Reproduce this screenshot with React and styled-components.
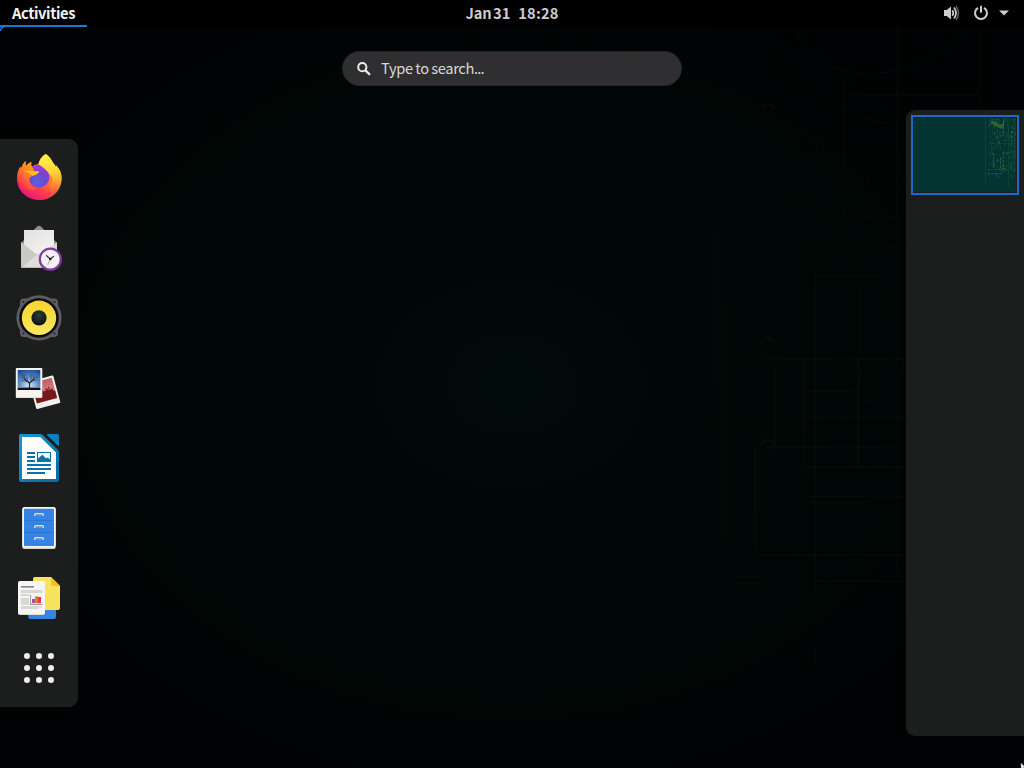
import React from "react";
import styled, { createGlobalStyle } from "styled-components";

const GlobalStyle = createGlobalStyle`
  *, *::before, *::after { box-sizing: border-box; }
  body {
    margin: 0;
    background: #000;
    overflow: hidden;
    font-family: "Noto Sans CJK SC", "Noto Sans", sans-serif;
  }
`;

const Desktop = styled.div`
  position: relative;
  isolation: isolate;
  display: flex;
  flex-direction: column;
  width: 1024px;
  height: 768px;
  overflow: hidden;
  background: radial-gradient(ellipse 560px 430px at 50% 50%, #000a09 0%, #000706 50%, #000303 100%);
`;

const Backdrop = styled.svg`
  position: absolute;
  inset: 0;
  z-index: -1;
  opacity: 0.65;
`;

const TopBar = styled.header`
  display: grid;
  grid-template-columns: 1fr auto 1fr;
  height: 27px;
  background: #000;
  font-size: 14.67px;
  font-weight: 700;
  line-height: 25px;
`;

const Activities = styled.div`
  width: 87px;
  height: 27px;
  padding-left: 12px;
  color: #f2f2f2;
  border-bottom: 2px solid #1c74dc;
  letter-spacing: -0.38px;
  white-space: nowrap;
`;

const Clock = styled.div`
  display: flex;
  gap: 8px;
  color: #ccc;
  white-space: nowrap;
`;

const ClockDate = styled.span`
  letter-spacing: -0.1px;
  word-spacing: -1.6px;
`;

const ClockTime = styled.span`
  letter-spacing: 0.2px;
`;

const StatusArea = styled.div`
  display: flex;
  justify-content: flex-end;
  align-items: center;
  gap: 13px;
  padding-right: 15px;
  padding-bottom: 1px;
`;

const CornerArc = styled.svg`
  display: block;
  height: 5px;
  width: 6px;
  flex: none;
`;

const SearchRow = styled.div`
  display: flex;
  justify-content: center;
  height: 78px;
  padding-top: 19px;
`;

const SearchEntry = styled.div`
  display: flex;
  align-items: center;
  gap: 9px;
  width: 340px;
  height: 35px;
  padding: 0 13px;
  border: 1px solid #232525;
  border-radius: 18px;
  background: #2f2f31;
  color: #d8d8d8;
  font-size: 14.67px;
  white-space: nowrap;
`;

const SearchHint = styled.span`
  padding-bottom: 2px;
  letter-spacing: -0.35px;
  word-spacing: -0.4px;
`;

const HintDots = styled.span`
  letter-spacing: -0.8px;
`;

const Overview = styled.main`
  display: flex;
  justify-content: space-between;
  align-items: flex-start;
`;

const Dash = styled.nav`
  display: flex;
  flex-direction: column;
  width: 78px;
  height: 568px;
  margin-top: 29px;
  padding: 4px 0;
  border-radius: 0 9px 9px 0;
  background: #1c1e1d;
`;

const DashItem = styled.div`
  display: flex;
  justify-content: center;
  align-items: center;
  height: 70px;
`;

const Workspaces = styled.aside`
  width: 118px;
  height: 626px;
  padding: 5px;
  border-radius: 9px 0 0 9px;
  background: #1c1e1d;
`;

const Thumbnail = styled.div`
  width: 108px;
  height: 80px;
  padding: 1px;
  border: 2px solid #1b6acb;
  background: #1c1e1d;

  svg { display: block; }
`;

const Pointer = styled.svg`
  position: absolute;
  right: 0;
  bottom: 0;
`;

const Icon = ({ children }) => (
  <svg width="48" height="48" viewBox="0 0 48 48">{children}</svg>
);

const Firefox = () => (
  <Icon>
    <defs>
      <linearGradient id="fxBody" x1=".82" y1=".08" x2=".3" y2="1">
        <stop offset=".05" stopColor="#fff044" />
        <stop offset=".3" stopColor="#ffb82b" />
        <stop offset=".52" stopColor="#ff7139" />
        <stop offset=".75" stopColor="#ff3750" />
        <stop offset="1" stopColor="#e5147e" />
      </linearGradient>
      <linearGradient id="fxTail" x1=".4" y1="0" x2=".6" y2="1">
        <stop offset="0" stopColor="#fff24a" />
        <stop offset=".5" stopColor="#ffd238" />
        <stop offset="1" stopColor="#ff7a30" stopOpacity="0" />
      </linearGradient>
      <linearGradient id="fxHead" x1="0" y1="1" x2="1" y2="0">
        <stop offset="0" stopColor="#ff3f4a" stopOpacity="0" />
        <stop offset=".55" stopColor="#ff8a20" />
        <stop offset="1" stopColor="#ffa91f" />
      </linearGradient>
      <radialGradient id="fxGlobe" cx=".42" cy=".75" r=".8">
        <stop offset="0" stopColor="#5a63dd" />
        <stop offset=".5" stopColor="#6c48cf" />
        <stop offset="1" stopColor="#a532d8" />
      </radialGradient>
    </defs>
    <path fill="url(#fxBody)" d="M30.8 0C35 2.8 36.5 6 38.5 9.5c1.2 1 1.7 2 2 3.1l.7-1.1c3.8 4 5.5 8.3 5.5 12.7C46.5 37 36.5 46 24.3 46 11.5 46 2 36.5 2 24c0-5.2 1.3-8.5 3.5-11.5L6 15c1-3.5 2.6-6 4.6-8l.2 5.2c1.4-1.3 3.2-3.6 5.6-4.2-.5 2-.2 3.3.3 4.8 2-1.6 4-2.5 6.7-2.5C24.5 7 26.5 2.5 30.8 0Z" />
    <circle cx="24.2" cy="23" r="10.4" fill="url(#fxGlobe)" />
    <path fill="#a436da" d="M16.5 13.2c4-3.2 8.5-3.4 12.3-1.3 3 1.7 4.8 4 5.5 7-4-3.6-8.3-4.4-12.5-2.8Z" />
    <path fill="url(#fxTail)" d="M30.8 0C35 2.8 36.5 6 38.5 9.5c1.2 1 1.7 2 2 3.1l.7-1.1c3.8 4 5.5 8.3 5.3 12.7-.3 7-3.5 12.3-8.8 15.8-3-3-3.3-6-1.5-9.5 1.2-4.5.1-8-2-10.5-2.5-4-6-6.5-10.8-9.7C24 6.4 26.5 2.5 30.8 0Z" />
    <path fill="url(#fxHead)" d="M4 28c-1-7-1-11 1.5-15.5L6 15c1-3.5 2.6-6 4.6-8l.2 5.2c1.4-1.3 3.2-3.6 5.6-4.2-.5 2-.2 3.3.3 4.8l2.5 4 5 .4c-.6 2.4-2.7 3.3-5.2 4.2-2 .7-3.6 1-4.5 3-1 5 2 9 7 10.6C13 38 6 35 4 28Z" />
    <path fill="#ffbd28" d="M8.3 17c2.7-.3 5.8-.5 8.5.2l7.2.4c-.8 2.7-3.4 3.3-6.4 4.2-2.2-2.6-5.4-3.9-9.3-4.8Z" />
    <path fill="#ff6b37" opacity=".55" d="M34 20c2.2 6 .5 11.5-4 13.5 6-.5 8.8-6 6.6-11.5-.9-1.2-1.7-1.8-2.6-2Z" />
  </Icon>
);

const Evolution = () => (
  <Icon>
    <defs>
      <linearGradient id="paper" x1="0" y1="0" x2=".6" y2="1">
        <stop offset="0" stopColor="#e2e1df" /><stop offset="1" stopColor="#f6f5f4" />
      </linearGradient>
    </defs>
    <path fill="#8f8f8c" d="M6 19 21.8 2.7Q24 1 26.2 2.7L42 19v24.5H6Z" />
    <path fill="url(#paper)" d="M9 6h30v32H9Z" />
    <path fill="#c9c9c5" d="m6 18 17 13.5L6 43.7Z" />
    <path fill="#d6d5d1" d="m42 18-16 13 16 12.7Z" />
    <path fill="#deddda" d="M6 43.7 21 30.8q3-2 6 0l15 12.9Z" />
    <path fill="none" stroke="#bdbdb8" strokeWidth=".5" d="m6 43.5 15-12.7q3-2 6 0" />
    <circle cx="35.3" cy="35.2" r="10.5" fill="#f3f1f4" stroke="#813ca1" strokeWidth="2.2" />
    <path stroke="#242424" strokeWidth="1.2" strokeLinecap="round" d="m35.3 35-3.8-3.4M35.3 35l3.3-2.6" />
    <path stroke="#e87b77" strokeWidth=".8" d="m35.2 35-2.5 6" />
    <circle cx="35.3" cy="35" r="1.3" fill="#161616" />
  </Icon>
);

const Speaker = () => (
  <Icon>
    <defs>
      <linearGradient id="cone" x1="0" y1="0" x2="0" y2="1">
        <stop offset="0" stopColor="#f8d22e" /><stop offset="1" stopColor="#f9e961" />
      </linearGradient>
      <radialGradient id="dome" cx=".5" cy=".35" r=".6">
        <stop offset="0" stopColor="#343b3e" /><stop offset="1" stopColor="#0d1213" />
      </radialGradient>
    </defs>
    <rect x="5" y="4.6" width="38" height="38.4" rx="4" fill="#5e5c64" />
    <circle cx="24" cy="23.8" r="22.6" fill="#5e5c64" />
    {[[8.4, 8], [39.6, 8], [8.4, 39.6], [39.6, 39.6]].map(([x, y]) => (
      <circle key={`${x}-${y}`} cx={x} cy={y} r="1" fill="#202024" />
    ))}
    <circle cx="24" cy="23.8" r="19.9" fill="#171719" />
    <circle cx="24" cy="23.8" r="18.6" fill="#050505" />
    <circle cx="24" cy="23.8" r="17.2" fill="url(#cone)" />
    <circle cx="24" cy="23.8" r="7.6" fill="url(#dome)" />
  </Icon>
);

const Photos = () => (
  <Icon>
    <defs>
      <radialGradient id="sky" cx=".5" cy=".8" r=".85">
        <stop offset="0" stopColor="#dce9f6" /><stop offset=".5" stopColor="#6391cb" /><stop offset="1" stopColor="#1d4d96" />
      </radialGradient>
      <linearGradient id="dusk" x1="0" y1="0" x2="0" y2="1">
        <stop offset="0" stopColor="#c05c62" /><stop offset="1" stopColor="#dc9b97" />
      </linearGradient>
    </defs>
    <g transform="translate(14 17.8) rotate(-15)">
      <rect width="25" height="28.5" rx="1" fill="#f2f1ed" />
      <rect x="2" y="2" width="21" height="19" fill="url(#dusk)" />
      <path fill="#78181b" d="M2 15h4v-2h2v1h2v-3h1v2h3v-2h2v2h1v-3h1v3h2v-1h1v3h2v8H2Z" />
    </g>
    <rect x=".8" y="4" width="26.5" height="30" rx="1" fill="#f4f4f1" />
    <path fill="#dcddd5" d="M1 33h26v.8H1Z" />
    <rect x="2.7" y="6" width="22.6" height="20" fill="url(#sky)" />
    <path fill="#111" d="M2.7 24.1q11-1 22.6 0V26H2.7Z" />
    <path fill="none" stroke="#1a2433" strokeWidth="1.2" d="M14.5 25v-6L9 14.5M14.5 19l5-4.5" />
    <path fill="none" stroke="#263b55" strokeWidth=".65" d="M9 14.5 6 13m4 2.5L9 10m3 7V13m0 4.5-6-1m10 0v-6m1 6.5 5-1m-3.5-2.5V11m0 3 4-1M9 14l-3-5" />
  </Icon>
);

const Writer = () => (
  <Icon>
    <defs>
      <linearGradient id="writer" x1="0" y1="0" x2="1" y2="1">
        <stop offset="0" stopColor="#1d95d3" /><stop offset="1" stopColor="#0369a3" />
      </linearGradient>
    </defs>
    <path fill="url(#writer)" d="M6 0H25q1.7 0 3 1.2L42.8 15.8Q44 17 44 18.7V46q0 2-2 2H6Q4 48 4 46V2Q4 0 6 0Z" />
    <path fill="#fff" d="M7 3h18.3L41 18.5V45H7Z" />
    <path fill="#0b80c1" d="M32.8 0H42q2 0 2 2v9q0 1.3-1.2.4L32 1.2Q31.5 0 32.8 0Z" />
    <path fill="#0872ad" d="M12 18h8v2h-8Zm0 4h8v2h-8Zm0 4h8v2h-8Zm0 4h24v2H12Zm0 4h24v2H12Zm0 4h18v2H12ZM22 18h14v10H22Z" />
    <path fill="#fff" d="M23 19h12v6.5l-2.2-2.3-1.5 1.3-4-3.8L23 24.5Z" />
  </Icon>
);

const Files = () => (
  <Icon>
    <rect x="7.3" y="3" width="33.4" height="42" rx="2.6" fill="#d9d7d4" />
    <rect x="7.3" y="3" width="33.4" height="40.6" rx="2.6" fill="#f6f5f4" />
    <rect x="9" y="4.8" width="30" height="37" rx="1" fill="#3584e4" />
    <path stroke="#2868c4" strokeWidth=".6" d="M9 16.3h30M9 28.3h30M9 41.4h30" />
    {[9, 21, 33].map((y) => (
      <g key={y}>
        <path fill="#deddda" d={`M19 ${y + 3}v-1.5q0-1.5 1.5-1.5h7q1.5 0 1.5 1.5V${y + 3}h-1.5V${y + 1.5}h-7V${y + 3}Z`} />
        <rect x="20.2" y={y + 1.4} width="7.6" height="1.2" fill="#929aa7" />
      </g>
    ))}
  </Icon>
);

const Documents = () => (
  <Icon>
    <rect x="13.3" y="20" width="27.7" height="25" rx="2" fill="#3584e4" />
    <path fill="#f8e45c" d="M20 3h16l9 9v22q0 2-2 2H18V5q0-2 2-2Z" />
    <path fill="#f5c211" d="M36 3v7q0 2 2 2h7Z" />
    <rect x="3" y="7.4" width="27" height="33.6" rx="2" fill="#d8d5d1" />
    <rect x="3" y="7" width="27" height="33.2" rx="2" fill="#f6f5f4" />
    <path fill="#85838c" d="M6 12h13v1.6H6Z" />
    <path fill="#d8d7d4" d="M6 16h21.3v3H6Zm0 4h8v2H6Zm0 4h8v6.8H6Zm0 8h21.3v1.6H6Zm0 1.6h17V35H6Z" />
    <path fill="#9a9996" d="M15 20.7h1v9.1h11.3v1.1H15Z" />
    <path fill="#a050bd" d="M17 25h3v4h-3Z" />
    <path fill="#ed7b18" d="M20 22.3h3V29h-3Z" />
    <path fill="#e33946" d="M23 23h3v6h-3Z" />
  </Icon>
);

const AppGrid = () => (
  <Icon>
    {[12, 24, 36].flatMap((y) => [12, 24, 36].map((x) => (
      <circle key={`${x}-${y}`} cx={x} cy={y} r="3" fill="#eeeeec" />
    )))}
  </Icon>
);

const dashItems = [Firefox, Evolution, Speaker, Photos, Writer, Files, Documents, AppGrid];

const Circuit = () => (
  <Backdrop width="1024" height="768" fill="none" stroke="#0b0e05" strokeWidth="1">
    <path stroke="#050d09" d="M717 200v190M724 300v250M715 364h191M718 208h40M700 420h206" />
    <path d="M898 28v550M897 28v550M979 28v82M843 95h135M843 160h60M843 217h62M845 247h60M867 175h38v11h-38ZM808 138h15v16h-15ZM808 248h15v15h-15ZM844 80v170M859 240v230" />
    <path stroke="#10130a" d="M766 359h140M804 361v106h102M804 391h53M858 358v109M806 417h100M806 497h100M815 276v305M818 581h88M814 276h73M755 447v108h150M732 577h30M737 583h25M815 583v12M815 650v12M775 370v80M767 447h130M809 502h60" />
    <path d="M795 28c20 40 60 55 110 40 30-10 48-20 65-40M775 60c30 37 75 60 125 65M792 75l15 18M775 60l15-20M828 360c7 30 25 44 48 40 15-2 26-20 27-38M875 260c-2 38 12 53 37 55M730 155c30 35 75 55 135 60" />
    <path stroke="#110f07" strokeWidth="2" d="m762 108 6-5 6 5M762 342l6-5 6 5M762 444l6-5 6 5" />
    <g stroke="#090e07"><circle cx="873" cy="373" r="5" /><circle cx="873" cy="373" r="13" /><circle cx="895" cy="441" r="6" /><circle cx="895" cy="441" r="12" /></g>
  </Backdrop>
);

const noise = (n) => {
  const value = Math.sin(n * 91.7 + 17.3) * 43758.5453;
  return value - Math.floor(value);
};

const specks = Array.from({ length: 270 }, (_, n) => {
  const y = Math.floor(Math.pow(noise(n), 1.25) * 58);
  const x = 75 + Math.floor(noise(n + 400) * 27);
  const vertical = noise(n + 900) > 0.5;
  return { x, y, w: vertical ? 1 : 2, h: vertical ? 3 : 1, o: 0.05 + noise(n + 1400) * 0.22 };
});

const Wallpaper = () => (
  <svg width="102" height="74" viewBox="0 0 102 74">
    <path fill="#033431" d="M0 0h102v74H0Z" />
    {specks.map((s, i) => (
      <rect key={i} x={s.x} y={s.y} width={s.w} height={s.h} fill={i % 4 ? "#258447" : "#809133"} opacity={s.o} />
    ))}
    <path fill="#7fa82c" opacity=".35" d="m76 4 4-1 3 1 3 3 3-1v5l-4-1-4-2-3-2Z" />
    <path stroke="#77802e" strokeDasharray="3 1" opacity=".4" d="M73 55.5h16M89.5 1v17M89.5 34v20M79.5 35v16M97.5 13v14M86.5 39v13" />
    <path stroke="#14533a" opacity=".45" d="M71.5 1v65M94.5 5v64M100.5 1v51M76 25.5h26M73 51.5h29" />
  </svg>
);

const Volume = () => (
  <svg width="16" height="16" viewBox="0 0 16 16">
    <path fill="#ccc" d="M0 5h2.7L7 1.5v13L2.7 11H0Z" />
    <path fill="none" stroke="#ccc" strokeWidth="1.7" d="M8.3 5.2q2 2.8 0 5.6M10 2.5q4.1 5.5 0 11" />
    <path fill="none" stroke="#5b5b5b" strokeWidth="1.6" d="M12 1q4.9 7 0 14" />
  </svg>
);

const Power = () => (
  <svg width="16" height="16" viewBox="0 0 16 16" fill="none" stroke="#ccc" strokeWidth="2">
    <path d="M5 2.9a6 6 0 1 0 6 0" /><path strokeLinecap="round" d="M8 1.5V7" />
  </svg>
);

const Caret = () => (
  <svg width="10" height="6" viewBox="0 0 10 6"><path fill="#ccc" d="M0 .5h10L5 5.5Z" /></svg>
);

const SearchGlyph = () => (
  <svg width="16" height="16" viewBox="0 0 16 16" fill="none" stroke="#eee" strokeWidth="2">
    <circle cx="6.3" cy="6.2" r="4.1" /><path strokeLinecap="round" strokeWidth="2.3" d="m9.6 9.6 3.7 3.5" />
  </svg>
);

const StatusPair = styled.div`
  display: flex;
  align-items: center;
  gap: 13px;
  margin-right: -3px;
`;

export default function App() {
  return (
    <Desktop>
      <GlobalStyle />
      <Circuit />
      <TopBar>
        <Activities>Activities</Activities>
        <Clock><ClockDate>Jan 31</ClockDate><ClockTime>18:28</ClockTime></Clock>
        <StatusArea>
          <StatusPair><Volume /><Power /></StatusPair>
          <Caret />
        </StatusArea>
      </TopBar>
      <CornerArc viewBox="0 0 6 5">
        <path fill="#000" d="M0 0h6Q0 0 0 5Z" />
        <path fill="none" stroke="#1c74dc" strokeWidth="1.5" d="M5 -.5Q.7 0 .5 4" />
      </CornerArc>
      <SearchRow>
        <SearchEntry>
          <SearchGlyph />
          <SearchHint>Type to search<HintDots>...</HintDots></SearchHint>
        </SearchEntry>
      </SearchRow>
      <Overview>
        <Dash>
          {dashItems.map((Glyph, i) => <DashItem key={i}><Glyph /></DashItem>)}
        </Dash>
        <Workspaces>
          <Thumbnail><Wallpaper /></Thumbnail>
        </Workspaces>
      </Overview>
      <Pointer width="4" height="5" viewBox="0 0 4 5">
        <path fill="#fff" stroke="#777" strokeWidth=".5" d="M1 0v5h3V3Z" />
      </Pointer>
    </Desktop>
  );
}
